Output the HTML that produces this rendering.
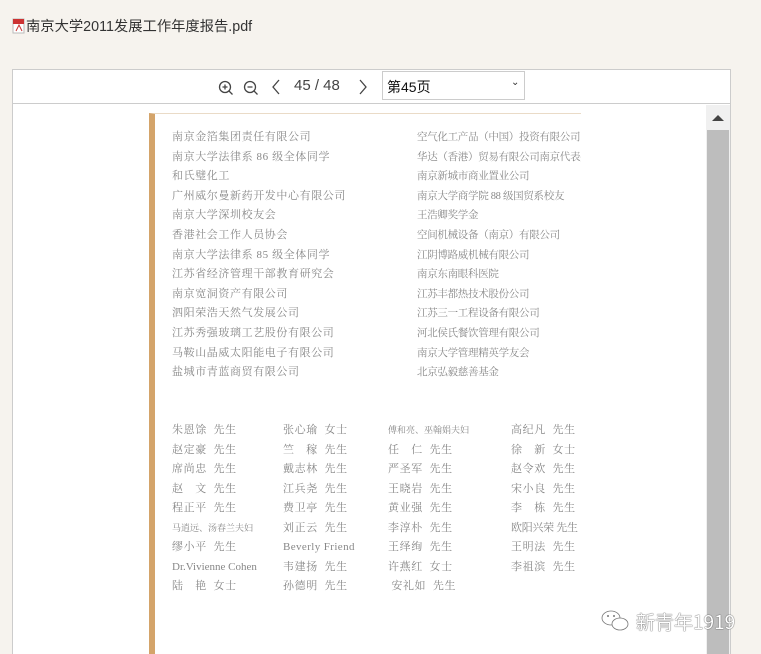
<!DOCTYPE html>
<html><head><meta charset="utf-8"><style>
*{margin:0;padding:0;box-sizing:border-box}
html,body{width:761px;height:654px;overflow:hidden}
body{background:#f6f3ee;position:relative;font-family:"Liberation Sans","Noto Sans CJK SC",sans-serif}
.title{position:absolute;left:12px;top:15px;font-size:14.3px;color:#333;display:flex;align-items:center}
.box{position:absolute;left:12px;top:69px;width:719px;height:585px;background:#fff;border:1px solid #ccc;border-bottom:none;overflow:hidden}
.tb{position:absolute;left:0;top:0;width:717px;height:34px;border-bottom:1px solid #ccc;background:#fff}
.tb span{position:absolute;font-size:15px;color:#444;top:7px}
.sel{position:absolute;left:369px;top:1px;width:143px;height:29px;border:1px solid #ccc;font-size:14px;color:#111;padding:5px 4px}
.sb{position:absolute;left:693px;top:35px;width:24px;height:549px;background:#f0f0f0}
.thumb{position:absolute;left:694px;top:60px;width:22px;height:524px;background:#bdbdbd}
.pg{position:absolute;left:136px;top:43px;width:432px;height:541px;background:#fff;border-left:6px solid #d4a46a;border-top:1px solid #eadbc7}
.t{position:absolute;font-family:"Liberation Serif","Noto Serif CJK SC",serif;font-size:11px;color:#888;white-space:pre;line-height:14px;letter-spacing:0.6px}
.wm{position:absolute;left:636px;top:608px;font-size:19px;color:#fff;font-family:"Noto Sans CJK SC",sans-serif;text-shadow:0 0 1px #555,0 0 1px #555}
</style></head><body>
<div class="title"><svg width="14" height="16" viewBox="0 0 14 16"><rect x="1" y="1" width="11" height="14" fill="#fff" stroke="#bbb"/><rect x="1" y="1" width="11" height="5" fill="#c33"/><path d="M4 13 L7 7 L10 13" stroke="#c33" fill="none"/></svg>南京大学2011发展工作年度报告.pdf</div>
<div class="box">
<div class="tb">
<svg style="position:absolute;left:205px;top:10px" width="16" height="16" viewBox="0 0 16 16"><circle cx="7" cy="7" r="5.5" stroke="#444" fill="none" stroke-width="1.3"/><path d="M4.5 7h5M7 4.5v5M11 11l3.5 3.5" stroke="#444" stroke-width="1.3"/></svg>
<svg style="position:absolute;left:230px;top:10px" width="16" height="16" viewBox="0 0 16 16"><circle cx="7" cy="7" r="5.5" stroke="#444" fill="none" stroke-width="1.3"/><path d="M4.5 7h5M11 11l3.5 3.5" stroke="#444" stroke-width="1.3"/></svg>
<svg style="position:absolute;left:258px;top:8px" width="10" height="18" viewBox="0 0 10 18"><path d="M8 2L2 9l6 7" stroke="#444" fill="none" stroke-width="1.3"/></svg>
<span style="left:281px">45 / 48</span>
<svg style="position:absolute;left:345px;top:8px" width="10" height="18" viewBox="0 0 10 18"><path d="M2 2l6 7-6 7" stroke="#444" fill="none" stroke-width="1.3"/></svg>
<div class="sel">第45页<span style="left:128px;top:5px;font-size:10px;color:#333">⌄</span></div>
</div>
<div class="sb"></div>
<svg style="position:absolute;left:699px;top:44px" width="12" height="8"><path d="M0 7L6 1L12 7Z" fill="#444"/></svg>
<div class="thumb"></div>
<div class="pg"></div>
</div>
<div class="t" style="left:172px;top:128px;line-height:19.6px">南京金箔集团责任有限公司
南京大学法律系 86 级全体同学
和氏璧化工
广州威尔曼新药开发中心有限公司
南京大学深圳校友会
香港社会工作人员协会
南京大学法律系 85 级全体同学
江苏省经济管理干部教育研究会
南京宽洞资产有限公司
泗阳荣浩天然气发展公司
江苏秀强玻璃工艺股份有限公司
马鞍山晶威太阳能电子有限公司
盐城市青蓝商贸有限公司</div>
<div class="t" style="left:417px;top:128px;line-height:19.6px;width:164px;overflow:hidden;letter-spacing:-0.3px;font-size:10.5px">空气化工产品（中国）投资有限公司
华达（香港）贸易有限公司南京代表处
南京新城市商业置业公司
南京大学商学院 88 级国贸系校友
王浩卿奖学金
空间机械设备（南京）有限公司
江阴博路威机械有限公司
南京东南眼科医院
江苏丰都热技术股份公司
江苏三一工程设备有限公司
河北侯氏餐饮管理有限公司
南京大学管理精英学友会
北京弘毅慈善基金</div>
<div class="t" style="left:172px;top:421px;line-height:19.5px">朱恩馀  先生
赵定豪  先生
席尚忠  先生
赵　文  先生
程正平  先生
<span style="font-size:9px;letter-spacing:0">马逍远、汤春兰夫妇</span>
缪小平  先生
<span style="letter-spacing:0">Dr.Vivienne Cohen</span>
陆　艳  女士</div>
<div class="t" style="left:283px;top:421px;line-height:19.5px">张心瑜  女士
竺　稼  先生
戴志林  先生
江兵尧  先生
费卫亭  先生
刘正云  先生
<span style="letter-spacing:0.4px">Beverly Friend</span>
韦建扬  先生
孙德明  先生</div>
<div class="t" style="left:388px;top:421px;line-height:19.5px"><span style="font-size:9px;letter-spacing:0">傅和亮、巫翰娟夫妇</span>
任　仁  先生
严圣军  先生
王晓岩  先生
黄业强  先生
李淳朴  先生
王绎绚  先生
许燕红  女士
 安礼如  先生</div>
<div class="t" style="left:511px;top:421px;line-height:19.5px">高纪凡  先生
徐　新  女士
赵令欢  先生
宋小良  先生
李　栋  先生
<span style="letter-spacing:-0.3px">欧阳兴荣 先生</span>
王明法  先生
李祖滨  先生</div>
<svg style="position:absolute;left:600px;top:609px" width="32" height="24" viewBox="0 0 32 24"><ellipse cx="11" cy="9" rx="9" ry="7" fill="#fff" stroke="#777" stroke-width=".8"/><ellipse cx="20" cy="15" rx="8" ry="6" fill="#fff" stroke="#777" stroke-width=".8"/><circle cx="8" cy="7" r="1" fill="#777"/><circle cx="14" cy="7" r="1" fill="#777"/></svg>
<div class="wm">新青年1919</div>
</body></html>
